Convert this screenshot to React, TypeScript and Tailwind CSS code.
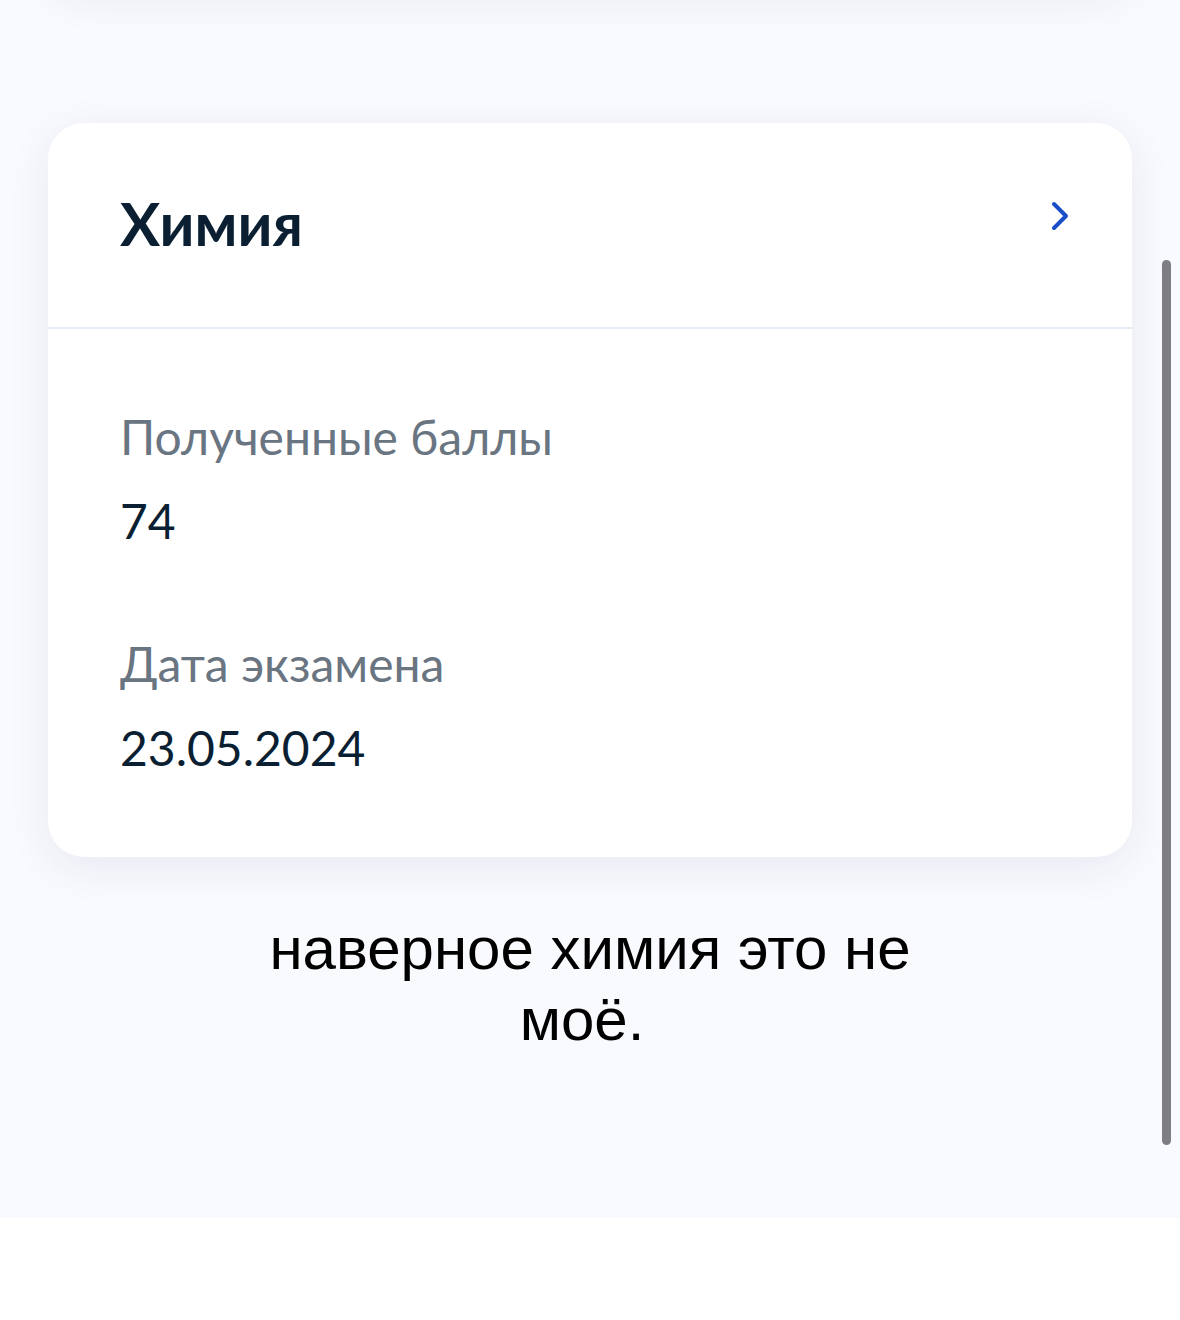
import React from "react";

const lato = { fontFamily: "Lato, 'Noto Sans', sans-serif" };

function ChevronRight() {
  return (
    <svg width="20" height="32" viewBox="0 0 20 32" fill="none" aria-hidden className="mb-[14px]">
      <path
        d="M4 4 L16 16 L4 28"
        stroke="#1a4fc8"
        strokeWidth="4"
        strokeLinecap="round"
        strokeLinejoin="round"
      />
    </svg>
  );
}

function Field({ label, value }: { label: string; value: string }) {
  return (
    <div className="flex flex-col gap-[24px]">
      <div className="text-[48px] leading-[60px] text-[#6a7582]">{label}</div>
      <div className="text-[48px] leading-[60px] text-[#0b1f33]">{value}</div>
    </div>
  );
}

export default function App() {
  return (
    <div className="relative w-[1180px] min-h-[1320px] bg-white overflow-hidden" style={lato}>
      <main className="flex flex-col h-[1218px] bg-[#f9fafe] px-[48px]">
        {/* tail of the previous result card, scrolled above */}
        <div className="-mt-[220px] h-[210px] shrink-0 rounded-[36px] bg-white shadow-[0_10px_40px_rgba(20,40,100,0.07)]" />

        <section className="mt-[133px] rounded-[36px] bg-white shadow-[0_10px_44px_rgba(20,40,100,0.08)]">
          <header className="flex items-center justify-between pl-[72px] pr-[62px] pt-[64px] pb-[68px] border-b-2 border-[#e4ebf3]">
            <h2 className="text-[60px] leading-[72px] font-bold text-[#0b1f33]">Химия</h2>
            <ChevronRight />
          </header>
          <div className="flex flex-col gap-[83px] pl-[72px] pt-[78px] pb-[79px]">
            <Field label="Полученные баллы" value="74" />
            <Field label="Дата экзамена" value="23.05.2024" />
          </div>
        </section>

        <p
          className="mt-[56px] text-center text-[60px] leading-[71px] text-black"
          style={{ fontFamily: "'Liberation Sans', Arial, sans-serif" }}
        >
          наверное химия это не
          <br />
          <span className="mr-[16px]">моё.</span>
        </p>
      </main>

      {/* overlay scrollbar thumb */}
      <div className="absolute right-[9px] top-[260px] h-[885px] w-[9px] rounded-full bg-[#7e7e82]" />
    </div>
  );
}
